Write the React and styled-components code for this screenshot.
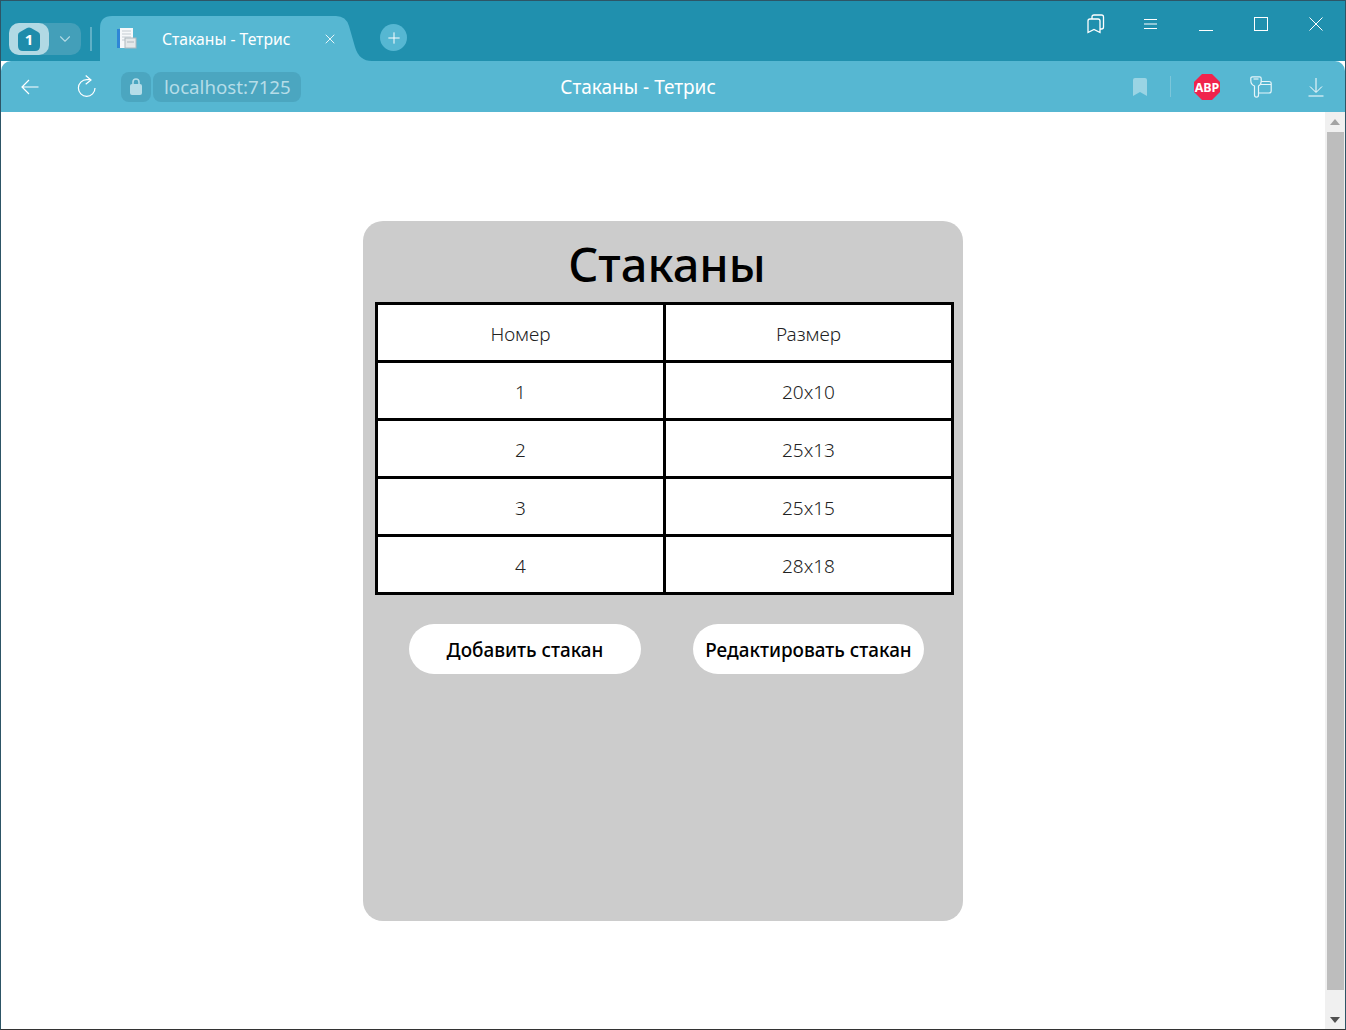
import styled, { createGlobalStyle } from "styled-components";
import { ChevronDown, X, Plus } from "lucide-react";

const Global = createGlobalStyle`
  html, body { margin: 0; padding: 0; background: #fff; overflow: hidden; }
  body { font-family: "Noto Sans", "Open Sans", sans-serif; }
`;

const Window = styled.div`
  width: 1346px;
  height: 1030px;
  box-sizing: border-box;
  border: 1px solid #2d5566;
  border-bottom-color: #333;
  display: flex;
  flex-direction: column;
`;

const TitleBar = styled.div`
  height: 60px;
  background: #2090ae;
  display: flex;
  flex-shrink: 0;
  align-items: flex-start;
  color: #fff;
`;

const WorkspaceGroup = styled.div`
  margin: 22px 0 0 8px;
  width: 72px;
  height: 32px;
  border-radius: 10px;
  background: #439fb9;
  display: flex;
  align-items: center;
`;

const WorkspaceBadge = styled.div`
  width: 40px;
  height: 32px;
  border-radius: 10px;
  background: #b1d9e4;
  display: flex;
  align-items: center;
  justify-content: center;
`;

const WorkspaceChevron = styled.div`
  flex: 1;
  display: flex;
  justify-content: center;
  color: #b1d9e4;
`;

const TabDivider = styled.div`
  width: 2px;
  height: 24px;
  margin: 26px 8px 0 9px;
  background: #5fb0c6;
`;

const Tab = styled.div`
  position: relative;
  width: 265px;
  height: 45px;
  margin-top: 15px;
  display: flex;
  align-items: center;
  font-size: 15.7px;
  color: #fff;
`;

const TabShape = styled.svg`
  position: absolute;
  left: 0;
  top: 0;
`;

const TabIcon = styled.svg`
  position: relative;
  margin-left: 17px;
`;

const TabTitle = styled.span`
  position: relative;
  margin-left: 25px;
  width: 152px;
  white-space: nowrap;
`;

const TabClose = styled.div`
  position: relative;
  display: flex;
  margin-left: 8px;
`;

const NewTab = styled.div`
  width: 27px;
  height: 27px;
  margin: 23px 0 0 15px;
  border-radius: 50%;
  background: #56b7d2;
  display: flex;
  align-items: center;
  justify-content: center;
`;

const WindowControls = styled.div`
  margin-left: auto;
  display: flex;
  align-items: center;
  height: 45px;
  padding-right: 2px;
`;

const ControlSlot = styled.div`
  width: 55px;
  display: flex;
  justify-content: center;
  align-items: center;
`;

const MinimizeIcon = styled.svg`
  margin-top: 12px;
`;

const Toolbar = styled.div`
  height: 51px;
  flex-shrink: 0;
  background: #56b7d2;
  border-radius: 10px 10px 0 0;
  display: flex;
  align-items: center;
  position: relative;
  color: #fff;
`;

const NavButton = styled.div`
  width: ${(p) => p.$w}px;
  display: flex;
  justify-content: center;
`;

const LockBox = styled.div`
  width: 30px;
  height: 30px;
  border-radius: 8px;
  background: #4ba6c0;
  margin-left: 7px;
  display: flex;
  align-items: center;
  justify-content: center;
`;

const AddressBox = styled.div`
  height: 30px;
  width: 148px;
  margin-left: 2px;
  border-radius: 8px;
  background: #4ba6c0;
  box-sizing: border-box;
  padding-left: 11px;
  font-size: 18.7px;
  line-height: 30px;
  color: #b5dde8;
  white-space: nowrap;
`;

const PageTitle = styled.div`
  position: absolute;
  left: 0;
  right: 70px;
  top: 0;
  line-height: 53px;
  text-align: center;
  font-size: 19px;
  color: #fff;
`;

const ToolbarEnd = styled.div`
  margin-left: auto;
  display: flex;
  align-items: center;
  padding-right: 21px;
`;

const ToolSep = styled.div`
  width: 1px;
  height: 21px;
  background: #7cc6da;
  margin: 0 23px;
`;

const KeyIcon = styled.svg`
  margin-left: 30px;
`;

const DownloadIcon = styled.svg`
  margin-left: 36px;
`;

const Viewport = styled.div`
  flex: 1;
  display: flex;
  min-height: 0;
`;

const Page = styled.main`
  flex: 1;
  background: #fff;
  display: flex;
  justify-content: center;
  padding-top: 109px;
`;

const Card = styled.section`
  width: 600px;
  height: 700px;
  box-sizing: border-box;
  background: #cccccc;
  border-radius: 20px;
  padding: 0 9px 0 12px;
`;

const Heading = styled.h1`
  margin: 0;
  height: 81px;
  line-height: 87px;
  padding-left: 5px;
  text-align: center;
  font-size: 47px;
  font-weight: 500;
  color: #000;
`;

const Table = styled.table`
  width: 579px;
  border-collapse: collapse;
  table-layout: fixed;
  background: #fff;
  border: 3px solid #000;
`;

const Cell = styled.td`
  height: 53px;
  padding: 2px 0 0;
  border: 3px solid #000;
  text-align: center;
  font-size: 19px;
  font-weight: 300;
  color: #222;
`;

const Actions = styled.div`
  display: flex;
  gap: 52px;
  padding: 29px 0 0 34px;
`;

const Action = styled.button`
  width: ${(p) => p.$w}px;
  height: 50px;
  border: 0;
  border-radius: 25px;
  background: #fff;
  padding: 2px 0 0;
  font-family: inherit;
  font-size: 18.9px;
  font-weight: 500;
  color: #000;
  white-space: nowrap;
`;

const Scrollbar = styled.div`
  width: 20px;
  background: #f0f0f0;
  display: flex;
  flex-direction: column;
  align-items: center;
`;

const ScrollArrow = styled.div`
  height: ${(p) => p.$h}px;
  box-sizing: border-box;
  flex-shrink: 0;
  display: flex;
  align-items: ${(p) => (p.$down ? "flex-end" : "center")};
  padding-bottom: ${(p) => (p.$down ? "6px" : "0")};
  justify-content: center;
`;

const ScrollThumb = styled.div`
  flex: 1;
  width: 17px;
  background: #bdbdbd;
`;

const rows = [
  ["1", "20x10"],
  ["2", "25x13"],
  ["3", "25x15"],
  ["4", "28x18"],
];

const App = () => {
  return (
    <>
      <Global />
      <Window>
        <TitleBar>
          <WorkspaceGroup>
            <WorkspaceBadge>
              <svg width="22" height="24" viewBox="0 0 22 24">
                <path d="M0 8 Q0 6 2 5 L9 1 Q11 0 13 1 L20 5 Q22 6 22 8 V19 Q22 24 17 24 H5 Q0 24 0 19 Z" fill="#1f8cab" />
                <text x="11" y="18" textAnchor="middle" fontSize="15" fontWeight="700" fill="#fff" fontFamily="Noto Sans">1</text>
              </svg>
            </WorkspaceBadge>
            <WorkspaceChevron>
              <ChevronDown size={18} strokeWidth={1.5} />
            </WorkspaceChevron>
          </WorkspaceGroup>
          <TabDivider />
          <Tab>
            <TabShape width="272" height="45" viewBox="0 0 272 45">
              <path d="M0 45 V12 Q0 0 12 0 H236 Q246 0 249 10 L255 31 Q259 45 272 45 Z" fill="#56b7d2" />
            </TabShape>
            <TabIcon width="20" height="21" viewBox="0 0 20 21">
              <rect x="0" y="1" width="4" height="19" fill="#2f86d6" />
              <rect x="3" y="0" width="13" height="20" fill="#f6f8fa" />
              <path d="M5 3 H14 M5 6 H14 M5 9 H14 M5 12 H8" stroke="#c4ccd2" strokeWidth="1" />
              <rect x="8" y="10" width="11" height="10" fill="#e4e8ea" stroke="#aeb8be" strokeWidth="1" />
              <path d="M10 14 H17" stroke="#aeb8be" strokeWidth="1" />
            </TabIcon>
            <TabTitle>Стаканы - Тетрис</TabTitle>
            <TabClose>
              <X size={16} strokeWidth={1.3} />
            </TabClose>
          </Tab>
          <NewTab>
            <Plus size={18} strokeWidth={1.3} color="#fff" />
          </NewTab>
          <WindowControls>
            <ControlSlot>
              <svg width="18" height="20" viewBox="0 0 18 20" fill="none" stroke="#fff" strokeWidth="1.3">
                <path d="M1 7 Q1 5 3 5 H11 Q13 5 13 7 V18.5 L7 15.5 L1 18.5 Z" />
                <path d="M5 5 V3 Q5 1 7 1 H14.5 Q16.5 1 16.5 3 V13 Q16.5 15 14.5 15 H13" />
              </svg>
            </ControlSlot>
            <ControlSlot>
              <svg width="13" height="12" viewBox="0 0 13 12" stroke="#fff" strokeWidth="1">
                <path d="M0 1.5 H13 M0 6 H13 M0 10.5 H13" />
              </svg>
            </ControlSlot>
            <ControlSlot>
              <MinimizeIcon width="14" height="14" viewBox="0 0 14 14" stroke="#fff" strokeWidth="1">
                <path d="M0 7.5 H14" />
              </MinimizeIcon>
            </ControlSlot>
            <ControlSlot>
              <svg width="14" height="14" viewBox="0 0 14 14" fill="none" stroke="#fff" strokeWidth="1">
                <rect x="0.5" y="0.5" width="13" height="13" />
              </svg>
            </ControlSlot>
            <ControlSlot>
              <svg width="14" height="14" viewBox="0 0 14 14" stroke="#fff" strokeWidth="1">
                <path d="M0.5 0.5 L13.5 13.5 M13.5 0.5 L0.5 13.5" />
              </svg>
            </ControlSlot>
          </WindowControls>
        </TitleBar>
        <Toolbar>
          <PageTitle>Стаканы - Тетрис</PageTitle>
          <NavButton $w={58}>
            <svg width="18" height="18" viewBox="0 0 18 18" fill="none" stroke="#fff" strokeWidth="1.2">
              <path d="M17.5 9 H1 M8 2 L1 9 L8 16" />
            </svg>
          </NavButton>
          <NavButton $w={55}>
            <svg width="22" height="24" viewBox="0 0 22 24" fill="none" stroke="#fff" strokeWidth="1.2">
              <path d="M19 13 A8.3 8.3 0 1 1 10.7 4.7 L14.5 4.7" />
              <path d="M9.7 0.5 L15 5 L9.7 9.3" />
            </svg>
          </NavButton>
          <LockBox>
            <svg width="12" height="17" viewBox="0 0 12 17">
              <path d="M3 7 V4 A3 3 0 0 1 9 4 V7" fill="none" stroke="#b5dde8" strokeWidth="1.6" />
              <rect x="0" y="6" width="12" height="11" rx="2" fill="#b5dde8" />
            </svg>
          </LockBox>
          <AddressBox>localhost:7125</AddressBox>
          <ToolbarEnd>
            <svg width="14" height="18" viewBox="0 0 14 18">
              <path d="M0 2 Q0 0 2 0 H12 Q14 0 14 2 V18 L7 14 L0 18 Z" fill="#9ad4e4" />
            </svg>
            <ToolSep />
            <svg width="26" height="26" viewBox="0 0 26 26">
              <path d="M8 0 H18 L26 8 V18 L18 26 H8 L0 18 V8 Z" fill="#f0234c" />
              <text x="13" y="18" textAnchor="middle" fontSize="12.5" fontWeight="700" fill="#fff" fontFamily="Noto Sans">ABP</text>
            </svg>
            <KeyIcon width="22" height="22" viewBox="0 0 22 22" fill="none" stroke="#e6f5f9" strokeWidth="1.2">
              <path d="M0.8 2.5 Q0.8 0.8 2.5 0.8 H9.5 Q11.2 0.8 11.2 2.5 V5.5 Q11.2 8.5 8.5 10 V19 Q8.5 21.2 6.5 21.2 Q4.5 21.2 4.5 19 V10 Q0.8 8.5 0.8 4.5 Z" />
              <path d="M11.2 5.5 H19 Q21.2 5.5 21.2 7.5 V15 Q21.2 17 19 17 H8.5 M10.5 8.5 H21.2" />
              <path d="M3.5 3 H8.5" />
            </KeyIcon>
            <DownloadIcon width="16" height="20" viewBox="0 0 16 20" fill="none" stroke="#fff" strokeWidth="1">
              <path d="M8 1 V15 M2 9.5 L8 15.5 L14 9.5 M0.5 19 H15.5" />
            </DownloadIcon>
          </ToolbarEnd>
        </Toolbar>
        <Viewport>
          <Page>
            <Card>
              <Heading>Стаканы</Heading>
              <Table>
                <colgroup>
                  <col width="50%" />
                  <col width="50%" />
                </colgroup>
                <tbody>
                  <tr>
                    <Cell>Номер</Cell>
                    <Cell>Размер</Cell>
                  </tr>
                  {rows.map((r) => (
                    <tr key={r[0]}>
                      <Cell>{r[0]}</Cell>
                      <Cell>{r[1]}</Cell>
                    </tr>
                  ))}
                </tbody>
              </Table>
              <Actions>
                <Action $w={232}>Добавить стакан</Action>
                <Action $w={231}>Редактировать стакан</Action>
              </Actions>
            </Card>
          </Page>
          <Scrollbar>
            <ScrollArrow $h={20}>
              <svg width="10" height="6" viewBox="0 0 10 6"><path d="M5 0 L10 6 H0 Z" fill="#a3a3a3" /></svg>
            </ScrollArrow>
            <ScrollThumb />
            <ScrollArrow $h={39} $down>
              <svg width="10" height="6" viewBox="0 0 10 6"><path d="M0 0 H10 L5 6 Z" fill="#505050" /></svg>
            </ScrollArrow>
          </Scrollbar>
        </Viewport>
      </Window>
    </>
  );
};

export default App;
